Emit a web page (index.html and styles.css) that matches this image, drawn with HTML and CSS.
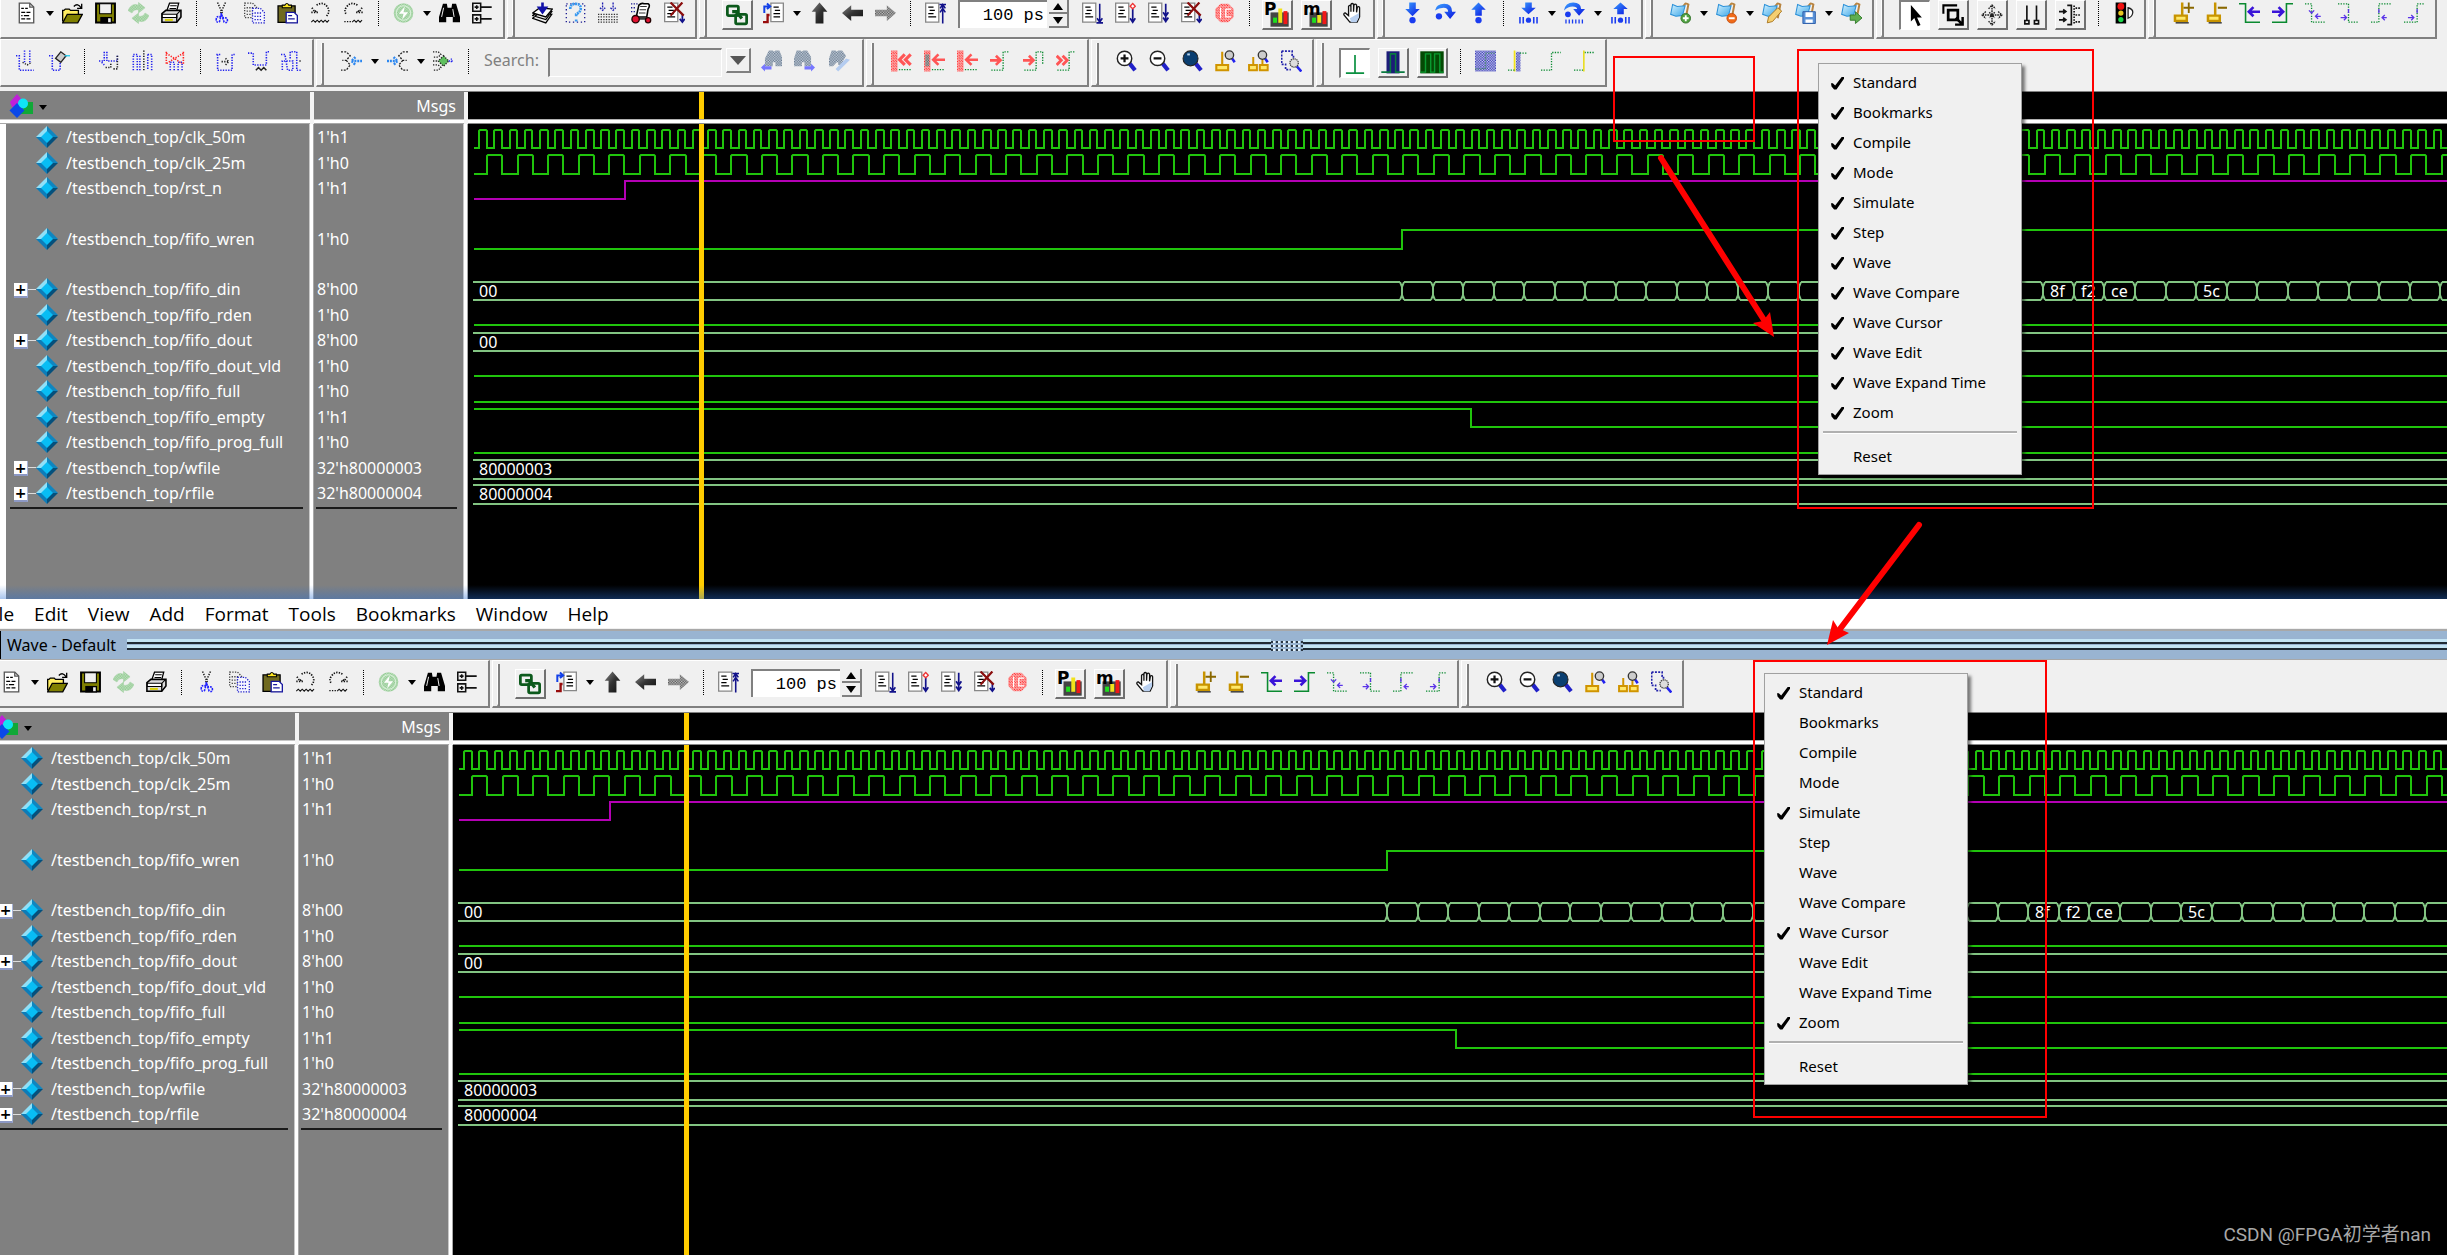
FILE: index.html
```html
<!DOCTYPE html>
<html lang="en">
<head>
<meta charset="utf-8">
<title>Wave - Default</title>
<link rel="stylesheet" href="styles.css">
</head>
<body>
<svg class="sprite" width="0" height="0" aria-hidden="true">
  <defs>
    <pattern id="ck-red" width="2" height="2" patternUnits="userSpaceOnUse"><path d="M0 0h1v1H0zM1 1h1v1H1z" fill="#f22"/><path d="M1 0h1v1H1zM0 1h1v1H0z" fill="#faa"/></pattern>
    <pattern id="ck-green" width="2" height="2" patternUnits="userSpaceOnUse"><path d="M0 0h2v2H0z" fill="#c4e2c4"/><path d="M0 0h1v1H0zM1 1h1v1H1z" fill="#8cc88c"/></pattern>
    <pattern id="ck-gray" width="2" height="2" patternUnits="userSpaceOnUse"><path d="M0 0h2v2H0z" fill="#c4c4c4"/><path d="M0 0h1v1H0zM1 1h1v1H1z" fill="#555"/></pattern>
    <pattern id="ck-steel" width="2" height="2" patternUnits="userSpaceOnUse"><path d="M0 0h2v2H0z" fill="#c9d2de"/><path d="M0 0h1v1H0zM1 1h1v1H1z" fill="#66788c"/></pattern>
    <pattern id="ck-blue" width="2" height="2" patternUnits="userSpaceOnUse"><path d="M0 0h2v2H0z" fill="#d4d8f4"/><path d="M0 0h1v1H0zM1 1h1v1H1z" fill="#3030b0"/></pattern>
    <linearGradient id="g-dark" x1="0" y1="0" x2="1" y2="1"><stop offset="0" stop-color="#888"/><stop offset=".5" stop-color="#333"/><stop offset="1" stop-color="#111"/></linearGradient>
    <linearGradient id="g-blue" x1="0" y1="0" x2="1" y2="1"><stop offset="0" stop-color="#3aa0ff"/><stop offset="1" stop-color="#0a14e0"/></linearGradient>
    <linearGradient id="g-sky" x1="0" y1="0" x2="1" y2="1"><stop offset="0" stop-color="#d4f2ff"/><stop offset="1" stop-color="#3aa6e8"/></linearGradient>
  </defs>

  <symbol id="doc" viewBox="0 0 16 16"><path d="M2.5.5h8l3 3v12h-11z" fill="#fff" stroke="#555"/><path d="M10.500 .5v3h3" fill="none" stroke="#555"/><path d="M4 4.500h2m1 0h2M4 7.500h3m1 0h3M4 10h1m1 0h4M4 12.500h3m1 0h3" stroke="#000"/></symbol>
  <symbol id="open" viewBox="0 0 16 16"><path d="M.5 14.500V6h1l1-1h3l1 1h6v3" fill="#ffee60" stroke="#000"/><path d="M.5 15.500L4 9h11.500l-3.500 6.500z" fill="#808000" stroke="#000"/><path d="M9 3q3-3 5.500 1M15 1v3.500h-3.500" fill="none" stroke="#000"/></symbol>
  <symbol id="save" viewBox="0 0 16 16"><path d="M.8.8h14.400v14.400H.8z" fill="#808000" stroke="#000" stroke-width="1.500"/><path d="M3.500 1h9v7.500h-9z" fill="#f0f0f0" stroke="#000" stroke-width=".8"/><path d="M4 11h9v5H4z"/><path d="M10 12h2v3h-2z" fill="#eee"/></symbol>
  <symbol id="refresh" viewBox="0 0 16 16"><path d="M0 6q3-6 8-4V0l5 4-5 4V5.500Q4 5 3 8zM16 10q-3 6-8 4v2l-5-4 5-4v2.500q4 .5 5-2.500z" fill="url(#ck-green)" stroke="#9fd09f" stroke-width=".4"/></symbol>
  <symbol id="print" viewBox="0 0 16 16"><path d="M4.500 6l2-5.500h7L12 6" fill="#fff" stroke="#000"/><path d="M7 2.500h5M6.500 4.500h5" stroke="#000" stroke-width=".8"/><path d="M.7 8.500l3-2.500h11.500v5L12 15H.7z" fill="#ddd" stroke="#000" stroke-width="1.200"/><path d="M1 9h11v2.500H1zM12 9l3-3" fill="#fff" stroke="#000" stroke-width=".8"/><path d="M3 12.500h6v1.500H3z" fill="#d8d000"/><path d="M12 9v6" stroke="#000"/></symbol>
  <symbol id="cut" viewBox="0 0 16 16" fill="none" stroke-width="1.200"><path d="M5 0l4 9M11 0L7 9" stroke="#222" stroke-dasharray="1 1"/><path d="M8 8l-1 3q-3-1-3 2t2.500 1.500L8 9m0 0l1.500 3q3-1 3 1.500T10 15L8 9" stroke="#22f" stroke-dasharray="1.500 .7"/></symbol>
  <symbol id="copy" viewBox="0 0 16 16" stroke-dasharray="1 1"><path d="M.5.5h6l3 3v8h-9zM2 4h5M2 6.500h6M2 9h6" fill="none" stroke="#444"/><path d="M6.500 4.500h6l3 3v8h-9zM8 8h5M8 10.500h6M8 13h6" fill="#f6f6ff" stroke="#22c"/></symbol>
  <symbol id="paste" viewBox="0 0 16 16"><path d="M.8 2.500h13v12.700H.8z" fill="#706a20" stroke="#000"/><path d="M4 4V2h2q1.500-2.500 3 0h2v2z" fill="#ffe820" stroke="#000" stroke-width=".8"/><path d="M7 7.500h6l2.500 2.500v5.500H7z" fill="#fff" stroke="#1818a0"/><path d="M8.500 10h3m-3 2.500h5" stroke="#1818a0"/></symbol>
  <symbol id="undo" viewBox="0 0 16 16" fill="none" stroke="#111" stroke-dasharray="1 1"><path d="M1.500 4l2 3 2-1M1 7.500h5M5 2q5-3 8 1t-1 8" stroke-width="1.300"/><path d="M1 15l1.500-1.500L4 15l1.500-1.500L7 15l1.500-1.500L10 15l1.500-1.500L13 15l1.500-1.500" stroke-dasharray="none" stroke-width=".8"/></symbol>
  <symbol id="redo" viewBox="0 0 16 16" fill="none" stroke="#111" stroke-dasharray="1 1"><path d="M14.500 4l-2 3-2-1M15 7.500h-5M11 2Q6-1 3 3t0 6" stroke-width="1.300"/><path d="M1 14.500h5"/><path d="M7 15l1.500-1.500L10 15l1.500-1.500L13 15l1.500-1.500" stroke-dasharray="none" stroke-width=".8"/></symbol>
  <symbol id="go" viewBox="0 0 16 16"><circle cx="8" cy="8" r="7.500" fill="url(#ck-green)"/><circle cx="8" cy="8" r="5.500" fill="none" stroke="#d8f0d8" stroke-width=".8"/><path d="M9 3L4.500 8.500H8L7 13l4.500-5.500H8z" fill="#fff"/></symbol>
  <symbol id="find" viewBox="0 0 16 16"><path d="M3 1h3l.5 3h3L10 1h3l3 10v4h-5.500v-4h-5v4H0v-4z"/><path d="M3.500 4L2 11m8.500-6l1 6" stroke="#fff" stroke-width=".7"/></symbol>
  <symbol id="tree" viewBox="0 0 16 16" fill="none" stroke="#111" stroke-width="1.200"><path d="M.6.600h6v6h-6zM.6 9.400h6v6h-6zM6.600 3.500H15M6.600 12.500H15M2 3.500h3M3.600 2v3M2 12.500h3M3.600 11v3"/></symbol>

  <symbol id="compile" viewBox="0 0 16 16"><path d="M.5 12l4-3.500L15 9l-4.500 6.500zM.5 10L5 6.500l10 .5-4.500 6z" fill="#eee" stroke="#000"/><path d="M.5 8L6 4l9.500 1-5 6z" fill="#fff" stroke="#000"/><path d="M8 0v6M5.500 4L8 7.500 10.500 4z" stroke="#1212a8" stroke-width="2" fill="#1212a8"/></symbol>
  <symbol id="compile-ask" viewBox="0 0 16 16"><path d="M1 1h14v14H1z" fill="none" stroke="#1a1a90" stroke-dasharray="1 2"/><path d="M4 5q0-4 4-4t4 3.500Q12 7 8.500 9v2M8.500 13v2" fill="none" stroke="#3a9af0" stroke-width="2" stroke-dasharray="1.500 .5"/></symbol>
  <symbol id="compile-all" viewBox="0 0 16 16" fill="none"><path d="M3.500 0v5M11.500 0v5M1.500 4l2 2 2-2m4 0l2 2 2-2" stroke="#1a1ab0" stroke-dasharray="1.500 .8"/><path d="M0 9h16M0 11h16M0 13h16M0 15h16" stroke="#333" stroke-dasharray="1 1"/></symbol>
  <symbol id="sim" viewBox="0 0 16 16"><path d="M6 2q2-2 4-1h3q2 1 0 4l-1 6H4z" fill="#fff" stroke="#000" stroke-width="1.200"/><path d="M7 3h5M6.500 5.500h5M6 8h5" stroke="#333" stroke-width=".8"/><path d="M0 1h5M0 4h4M0 7h3" stroke="#1a1a90" stroke-dasharray="1 1"/><path d="M1 12.500h12" stroke="#000"/><circle cx="3.500" cy="12.700" r="2.800" fill="#e01030" stroke="#200"/><circle cx="13" cy="13.500" r="2" fill="#e01030" stroke="#200"/></symbol>
  <symbol id="doc-x" viewBox="0 0 16 16"><path d="M.5.5h10v14H.5z" fill="#fff" stroke="#888"/><path d="M2.500 3.500h4M3.500 6h4M2.500 8.500h5M2.500 11h6" stroke="#000"/><path d="M14 9v6m-2-2.500l2 2.500 1.800-2.500" stroke="#12128a" fill="none" stroke-width="1.300"/><path d="M5 0l10 10M14 0L5 10" stroke="#8a0d0d" stroke-width="1.700"/></symbol>

  <symbol id="link" viewBox="0 0 16 16" fill="none" stroke="#0c5a1c" stroke-width="2"><rect x="1" y="1.500" width="8" height="7" rx="1"/><rect x="7" y="7.500" width="8" height="7" rx="1"/><path d="M4.500 5.500h3l4 5" stroke-width="2.400"/></symbol>
  <symbol id="restart" viewBox="0 0 16 16"><path d="M6 .5h9.500v14H6z" fill="#fff" stroke="#888"/><path d="M8 3.500h4M9 6h4M8 8.500h5M8 11h5" stroke="#000"/><path d="M1 8V3h4M3 .8L5.500 3 3 5" fill="none" stroke="#1240e8" stroke-width="1.500"/><path d="M0 15h3.500V9.500H5" fill="none" stroke="#980c0c" stroke-width="1.800"/></symbol>
  <symbol id="arrow-up" viewBox="0 0 16 16"><path d="M8 0l6 7h-3v9H5V7H2z" fill="url(#g-dark)"/></symbol>
  <symbol id="arrow-left" viewBox="0 0 16 16"><path d="M0 8l7-6v3.500h9v5H7V14z" fill="url(#g-dark)"/></symbol>
  <symbol id="arrow-right" viewBox="0 0 16 16"><path d="M16 8L9 2v3.500H0v5h9V14z" fill="url(#ck-gray)"/></symbol>
  <symbol id="doc-top" viewBox="0 0 16 16"><path d="M.5.500h10v14.500H.5z" fill="#fff" stroke="#888"/><path d="M2.500 3.500h4M3.500 6h4M2.500 8.500h4M2.500 11h6" stroke="#000"/><path d="M13.500 16V1M11 1.500h5M11.500 4.500l2-3 2 3m-4 3l2-3 2 3" fill="none" stroke="#12128a" stroke-width="1.200"/></symbol>
  <symbol id="doc-down" viewBox="0 0 16 16"><path d="M.5.500h10v14.500H.5z" fill="#fff" stroke="#888"/><path d="M2.500 3.500h4M3.500 6h4M2.500 8.500h4M2.500 11h6" stroke="#000"/><path d="M13.500 1v14M11 15.500h5M11.500 12l2 3 2-3" fill="none" stroke="#12128a" stroke-width="1.200"/></symbol>
  <symbol id="doc-next" viewBox="0 0 16 16"><path d="M.5.500h10v14.500H.5z" fill="#fff" stroke="#888"/><path d="M2.500 3.500h4M3.500 6h4M2.500 8.500h4M2.500 11h6" stroke="#000"/><path d="M13.500 5v10M11.500 12l2 3 2-3" fill="none" stroke="#12128a" stroke-width="1.300"/><path d="M13.500.8l2 2-2 2-2-2z" fill="#fff" stroke="#e33"/></symbol>
  <symbol id="doc-all" viewBox="0 0 16 16"><path d="M.5.500h10v14.500H.5z" fill="#fff" stroke="#888"/><path d="M2.500 3.500h4M3.500 6h4M2.500 8.500h4M2.500 11h6" stroke="#000"/><path d="M13.500 1v14M11.500 7.500l2 3 2-3m-4 4l2 3 2-3" fill="none" stroke="#12128a" stroke-width="1.300"/></symbol>
  <symbol id="stop" viewBox="0 0 16 16"><path d="M5 1h6l4 4v6l-4 4H5l-4-4V5z" fill="url(#ck-red)"/><path d="M5 4v8M9 5h4M9 5v6h4" stroke="#fff" fill="none"/></symbol>
  <symbol id="perf" viewBox="0 0 20 20"><path d="M5 8h14v11H5z" fill="#444"/><path d="M7 12h3v4H7z" fill="#1ee01e"/><path d="M11 5h3v11h-3z" fill="#f2e21a"/><path d="M15 7h3v10h-3z" fill="#f01818"/><text x="0" y="10" class="glyph">P</text></symbol>
  <symbol id="mem" viewBox="0 0 20 20"><path d="M5 8h14v11H5z" fill="#444"/><path d="M7 12h3v4H7z" fill="#1ee01e"/><path d="M11 10h3v6h-3z" fill="#f2e21a"/><path d="M15 7h3v10h-3z" fill="#f01818"/><text x="0" y="10" class="glyph">m</text></symbol>
  <symbol id="hand" viewBox="0 0 16 16"><path d="M6 15L1.500 9.500Q1 8 2.500 8L5 10V3q1-1.500 1.800 0V7 1.500q1-1.500 2 0V7l.3-5q1-1.500 2 0v5.500l.6-4q1.300-1 1.700.5v7L11.500 15z" fill="#fff" stroke="#111"/><path d="M7 15l-1-3 7-4v3l-2 4z" fill="#b9d0f0"/></symbol>

  <symbol id="step-in" viewBox="0 0 16 16"><path d="M5.500 0h5v5h3L8 10.500 2.500 5h3z" fill="url(#g-blue)"/><circle cx="8" cy="13.500" r="2.400" fill="#1a3cf0"/></symbol>
  <symbol id="step-over" viewBox="0 0 16 16"><path d="M0 6Q1 1 7 1t6 6h3l-4.500 5.500L7 7h3q0-3-3.500-3T0 6z" fill="url(#g-blue)"/><circle cx="3" cy="10.500" r="2.400" fill="#1a3cf0"/></symbol>
  <symbol id="step-out" viewBox="0 0 16 16"><path d="M5.500 10V5.500h-3L8 0l5.500 5.500h-3V10z" fill="url(#g-blue)"/><circle cx="8" cy="13.500" r="2.400" fill="#1a3cf0"/></symbol>
  <symbol id="step-in-cur" viewBox="0 0 16 16"><path d="M5.500 0h5v4h3L8 9 2.500 4h3z" fill="url(#g-blue)"/><path d="M1.500 11v5M4 11v5M12 11v5M14.500 11v5" stroke="#1a3cf0" stroke-width="1.200"/><circle cx="8" cy="13.500" r="2" fill="#1a3cf0"/></symbol>
  <symbol id="step-over-cur" viewBox="0 0 16 16"><path d="M0 6Q1 0 7 0t6 5h3l-4.500 5L7 5h3q0-2-3.500-2T0 6z" fill="url(#g-blue)"/><circle cx="3" cy="9" r="2.200" fill="#1a3cf0"/><path d="M1.500 13v3M4 13v3M6.500 13v3M9 13v3M11.500 13v3M14 13v3" stroke="#1a3cf0"/></symbol>
  <symbol id="step-out-cur" viewBox="0 0 16 16"><path d="M5.500 9V5h-3L8 0l5.500 5h-3v4z" fill="url(#g-blue)"/><path d="M1.500 11v5M4 11v5M12 11v5M14.500 11v5" stroke="#1a3cf0" stroke-width="1.200"/><circle cx="8" cy="13.500" r="2" fill="#1a3cf0"/></symbol>

  <symbol id="flag" viewBox="0 0 16 16"><path d="M10 3l2-2.500 2 1L12 12" fill="none" stroke="#b88440" stroke-width="1.500"/><path d="M2 1.500l3.500 1.500 6-.5-2 7.500-5 .5L.5 9z" fill="url(#g-sky)" stroke="#2a90d8" stroke-width=".8"/></symbol>
  <symbol id="bm-add" viewBox="0 0 16 16"><use href="#flag"/><circle cx="12" cy="12" r="3.700" fill="#4fa040" stroke="#2c6c24" stroke-width=".6"/><path d="M12 9.800v4.400M9.800 12h4.400" stroke="#fff" stroke-width="1.400"/></symbol>
  <symbol id="bm-del" viewBox="0 0 16 16"><use href="#flag"/><circle cx="12" cy="12" r="3.700" fill="#f06a18" stroke="#c04808" stroke-width=".6"/><path d="M9.800 12h4.400" stroke="#fff" stroke-width="1.500"/></symbol>
  <symbol id="bm-edit" viewBox="0 0 16 16"><use href="#flag"/><path d="M5 11l7-7 3 2.500-7 8-4 1z" fill="#f6cf70" stroke="#a8741c" stroke-width=".7"/></symbol>
  <symbol id="bm-save" viewBox="0 0 16 16"><use href="#flag"/><path d="M6 7h9.500v9H6z" fill="#5a92d8" stroke="#2a5ca8" stroke-width=".7"/><path d="M8 7.500h5.500V11H8zM8 13h5.500v2.500H8z" fill="#fff"/></symbol>
  <symbol id="bm-load" viewBox="0 0 16 16"><use href="#flag"/><path d="M7 9.500h4V7l5 4.800-5 4.200v-2.500H7z" fill="#5fae50" stroke="#2f7a28" stroke-width=".7"/></symbol>

  <symbol id="pointer" viewBox="0 0 16 16"><path d="M5 0v12l2.500-2.500 2.500 6 2-1-2.500-5.500H13z"/></symbol>
  <symbol id="zoom-mode" viewBox="0 0 16 16" fill="none" stroke="#000"><path d="M1 7V1h10" stroke-width="1.500"/><path d="M4.500 4.500h7v7h-7z" stroke-width="2"/><path d="M10 10l5 5M15 9.500V15H9.500" stroke-width="1.800"/></symbol>
  <symbol id="pan" viewBox="0 0 16 16" fill="none" stroke="#222" stroke-dasharray="1.200 .6"><path d="M8 1v14M1 8h14M5.500 3.500L8 .8l2.500 2.700M5.500 12.500L8 15.200l2.500-2.700M3.500 5.500L.8 8l2.700 2.500M12.500 5.500L15.200 8l-2.700 2.500M6 6l4 4M10 6l-4 4"/></symbol>
  <symbol id="two-cursor" viewBox="0 0 16 16" fill="none" stroke="#111" stroke-width="1.200"><path d="M5 1v11M12 1v11M3.500 12h3v2.500h-3zM10.500 12h3v2.500h-3z"/></symbol>
  <symbol id="edit-mode" viewBox="0 0 16 16" fill="none" stroke="#111" stroke-width="1.200"><path d="M6 1h3v14H6M0 5.500h5M3 4l2 1.500L3 7M0 11.500h5M3 10l2 1.500L3 13"/><path d="M11 1v14M12 3h4M12 8h4M12 13h4" stroke-dasharray="1.200 .8"/></symbol>
  <symbol id="signal" viewBox="0 0 16 16"><path d="M2 0h8v16H2z"/><circle cx="6" cy="3" r="2.600" fill="#f01010"/><circle cx="6" cy="8" r="2" fill="#e8c820"/><circle cx="6" cy="13" r="2" fill="#1cd84c"/><path d="M11.500 4q4 1 3.500 4t-3.500 4z" fill="#fff" stroke="#222"/></symbol>

  <symbol id="cur-add" viewBox="0 0 16 16"><path d="M7 0v10M1.500 10h9v4h-9z" fill="#ffe86a" stroke="#c89400" stroke-width="1.900"/><path d="M2 15.500h10" stroke="#222"/><path d="M8 4h8M12 0v8" stroke="#8a6800" stroke-width="1.400"/></symbol>
  <symbol id="cur-del" viewBox="0 0 16 16"><path d="M7 0v10M1.500 10h9v4h-9z" fill="#ffe86a" stroke="#c89400" stroke-width="1.900"/><path d="M2 15.500h10" stroke="#222"/><path d="M9 4h7" stroke="#8a6800" stroke-width="1.600"/></symbol>
  <symbol id="edge-prev" viewBox="0 0 16 16" fill="none"><path d="M0 1h5v14h11" stroke="#0a8a30" stroke-width="1.200"/><path d="M8 7h8M11 3.500L7.500 7l3.500 3.500" stroke="#3a14d8" stroke-width="2"/></symbol>
  <symbol id="edge-next" viewBox="0 0 16 16" fill="none"><path d="M16 1h-5v14H0" stroke="#0a8a30" stroke-width="1.200"/><path d="M0 7h8M5 3.500L8.500 7 5 10.500" stroke="#3a14d8" stroke-width="2"/></symbol>
  <symbol id="fall-prev" viewBox="0 0 16 16" fill="none"><path d="M0 1h5v14h11" stroke="#0a8a30" stroke-dasharray="1 1"/><path d="M3 6l2 2 2-2M8 10.500h4M10 8.500l-2 2 2 2" stroke="#5a34e8"/></symbol>
  <symbol id="fall-next" viewBox="0 0 16 16" fill="none"><path d="M0 1h8v14h8" stroke="#0a8a30" stroke-dasharray="1 1"/><path d="M8 5v3M2 11.500h4M4.500 9.500l2 2-2 2" stroke="#5a34e8"/></symbol>
  <symbol id="rise-prev" viewBox="0 0 16 16" fill="none"><path d="M0 15h6V1h10" stroke="#0a8a30" stroke-dasharray="1 1"/><path d="M6 5v3M8 11.500h4M10.500 9.500l-2 2 2 2" stroke="#5a34e8"/></symbol>
  <symbol id="rise-next" viewBox="0 0 16 16" fill="none"><path d="M0 15h10V1h5" stroke="#0a8a30" stroke-dasharray="1 1"/><path d="M10 5v3M3 11.500h4M5.500 9.500l2 2-2 2" stroke="#5a34e8"/></symbol>

  <symbol id="we-insert" viewBox="0 0 16 16" fill="none" stroke="#22e" stroke-dasharray="1 1"><path d="M0 4h2.500v11h11M6.500 0v9M10.500 0v9" stroke-width="1.200"/><path d="M5 9l3.500 2L12 9" stroke="#222"/></symbol>
  <symbol id="we-paint" viewBox="0 0 16 16" fill="none"><path d="M0 4h2.500v11h6V8" stroke="#22e" stroke-width="1.200" stroke-dasharray="1 1"/><path d="M5 6l4-5 4 3-4 5z" fill="#ccc" stroke="#222"/><path d="M12 4h4" stroke="#2ce"/></symbol>
  <symbol id="we-cut" viewBox="0 0 16 16" fill="none" stroke="#22e" stroke-dasharray="1 1" stroke-width="1.200"><path d="M0 8h4V1m2 0v7h8V4M2 9l2 2"/><path d="M5 13h4V9M11 14h3V3" stroke="#222"/></symbol>
  <symbol id="we-copy" viewBox="0 0 16 16" fill="none" stroke="#22e" stroke-dasharray="1 1" stroke-width="1.200"><path d="M1 15V3h3v12M6 15V3M12 3v12M15 15V3h-4"/><path d="M9 0v16" stroke="#222"/></symbol>
  <symbol id="we-del" viewBox="0 0 16 16" fill="none" stroke="#22e" stroke-dasharray="1 1" stroke-width="1.200"><path d="M4 15V9h3v6M10 15V9h3v6"/><path d="M1 1v9M14 1v9M1 2l12 8M14 2L1 10" stroke="#f22"/></symbol>
  <symbol id="we-move" viewBox="0 0 16 16" fill="none" stroke="#22e" stroke-dasharray="1 1" stroke-width="1.200"><path d="M1 3h3M2 3v12h11V3h3"/><path d="M5 8.500h5M8 6l2.500 2.500L8 11" stroke="#222"/></symbol>
  <symbol id="we-stretch" viewBox="0 0 16 16" fill="none" stroke="#22e" stroke-dasharray="1 1" stroke-width="1.200"><path d="M0 2h4v9h10V1h2"/><path d="M6 15l2-2 2 2 2-2 2 2" stroke="#222" stroke-dasharray="none"/></symbol>
  <symbol id="we-invert" viewBox="0 0 16 16" fill="none" stroke="#22e" stroke-dasharray="1 1" stroke-width="1.200"><path d="M0 3h3l2 12h4V8H1v7M7 6V1h5v14h3"/><path d="M14 8h2" stroke="#222"/></symbol>
  <symbol id="exp-left" viewBox="0 0 16 16" fill="none"><path d="M0 1h4l3 3-3 3.500H1m3 0l3 3.500-3 4H0" stroke="#222" stroke-dasharray="1.500 1"/><path d="M8 8h8M11 5L8 8l3 3" stroke="#2a86f0" stroke-width="1.800" stroke-dasharray="1.500 .7"/></symbol>
  <symbol id="exp-right" viewBox="0 0 16 16" fill="none"><path d="M16 1h-4L9 4l3 3.500h3m-3 0l-3 3.500 3 4h4" stroke="#222" stroke-dasharray="1.500 1"/><path d="M0 8h8M5 5l3 3-3 3" stroke="#2a86f0" stroke-width="1.800" stroke-dasharray="1.500 .7"/></symbol>
  <symbol id="exp-all" viewBox="0 0 16 16" fill="none"><path d="M0 1h4l2 2-2 2H0M0 11h4l2 2-2 2H0M0 8h4" stroke="#222" stroke-dasharray="1 1"/><path d="M8 4l4 4-4 4-4-4z" fill="#5fc05f" stroke="#222" stroke-dasharray="1 1"/><path d="M12 8h4M14 6v4" stroke="#22e" stroke-dasharray="1 1"/></symbol>
  <symbol id="find-prev" viewBox="0 0 16 16"><path d="M6 0h3l1 1 1-1h3l2 5v7h-5V9H9v3H3V6z" fill="url(#ck-steel)"/><path d="M0 13l3-3v2h5v2.500H3V16z" fill="#77f"/></symbol>
  <symbol id="find-next" viewBox="0 0 16 16"><path d="M2 0h3l1 1 1-1h3l3 5v7H8V9H6v3H0V6z" fill="url(#ck-steel)"/><path d="M16 13l-3-3v2H8v2.500h5V16z" fill="#77f"/></symbol>
  <symbol id="find-opt" viewBox="0 0 16 16"><path d="M2 0h3l1 1 1-1h3l3 4-4 7H7V9H6l-3 3H0V6z" fill="url(#ck-steel)"/><path d="M5 14l8-8 3 1-9 9z" fill="#b4ccf0"/></symbol>

  <symbol id="cmp-first" viewBox="0 0 16 16"><path d="M0 0h5v16H0z" fill="url(#ck-red)"/><path d="M6 14.500h10" stroke="#0a8a30" stroke-dasharray="1 1"/><path d="M10.500 3L6.500 7l4 4M15 3l-4 4 4 4" fill="none" stroke="#f55" stroke-width="2.400"/></symbol>
  <symbol id="cmp-prev-a" viewBox="0 0 16 16"><path d="M0 0h5v16H0z" fill="url(#ck-red)"/><path d="M1 3h3v9H1z" fill="url(#ck-gray)"/><path d="M6 14.500h10" stroke="#0a8a30" stroke-dasharray="1 1"/><path d="M11 3L7 7l4 4M7 7h9" fill="none" stroke="#f55" stroke-width="2"/></symbol>
  <symbol id="cmp-prev" viewBox="0 0 16 16"><path d="M0 0h5v16H0z" fill="url(#ck-red)"/><path d="M6 14.500h10" stroke="#0a8a30" stroke-dasharray="1 1"/><path d="M11 3L7 7l4 4M7 7h9" fill="none" stroke="#f55" stroke-width="2"/></symbol>
  <symbol id="cmp-next" viewBox="0 0 16 16" fill="none"><path d="M1 15h9V1h5" stroke="#0a8a30" stroke-dasharray="1 1"/><path d="M0 7.500h8M4.500 4L8 7.500 4.500 11" stroke="#f55" stroke-width="2"/></symbol>
  <symbol id="cmp-next-a" viewBox="0 0 16 16" fill="none"><path d="M1 15h9V1h5v9" stroke="#0a8a30" stroke-dasharray="1 1"/><path d="M0 7.500h8M4.500 4L8 7.500 4.500 11" stroke="#f55" stroke-width="2"/></symbol>
  <symbol id="cmp-last" viewBox="0 0 16 16" fill="none"><path d="M1 15h9V1h5" stroke="#0a8a30" stroke-dasharray="1 1"/><path d="M.5 4L4 7.500.5 11M5 4l3.500 3.500L5 11" stroke="#f55" stroke-width="2.200"/></symbol>

  <symbol id="zoom-in" viewBox="0 0 16 16"><path d="M10.500 10l4 5" stroke="#2020c8" stroke-width="3.200"/><circle cx="6.500" cy="6" r="5.500" fill="#fff" stroke="#222" stroke-width="1.100"/><path d="M3.500 6h6M6.500 3v6" stroke="#111" stroke-width="1.700"/></symbol>
  <symbol id="zoom-out" viewBox="0 0 16 16"><path d="M10.500 10l4 5" stroke="#2020c8" stroke-width="3.200"/><circle cx="6.500" cy="6" r="5.500" fill="#fff" stroke="#222" stroke-width="1.100"/><path d="M3.500 6h6" stroke="#111" stroke-width="1.700"/></symbol>
  <symbol id="zoom-full" viewBox="0 0 16 16"><path d="M10.500 10l4 5" stroke="#2020c8" stroke-width="3.200"/><circle cx="6.500" cy="6" r="5.700" fill="#0a3e70" stroke="#222" stroke-width=".8"/><path d="M4 3h2" stroke="#bcd8f0" stroke-width="1.500"/></symbol>
  <symbol id="zoom-cur" viewBox="0 0 16 16"><path d="M5.500 1v10M1 11h9v4H1z" fill="#ffe86a" stroke="#d09400" stroke-width="1.600"/><path d="M13 6l2 3" stroke="#22e" stroke-width="2"/><circle cx="11" cy="3.500" r="3.200" fill="#ccc" stroke="#333"/></symbol>
  <symbol id="zoom-two" viewBox="0 0 16 16"><path d="M4 5v6M11 7v4M.8 11h6v4h-6zM9 11h6v4H9z" fill="#ffe86a" stroke="#d09400" stroke-width="1.500"/><path d="M13 6l2 3" stroke="#22e" stroke-width="2"/><circle cx="11" cy="3.500" r="3.200" fill="#ccc" stroke="#333"/></symbol>
  <symbol id="zoom-area" viewBox="0 0 16 16"><path d="M.5.500h8v3h1v3M.5.500v10h3v4h4" fill="none" stroke="#22a" stroke-width="1.300" stroke-dasharray="1.500 1"/><path d="M12 12l3.500 4" stroke="#22e" stroke-width="2"/><circle cx="10" cy="9.500" r="3.200" fill="#ddd" stroke="#444" stroke-dasharray="1 .5"/></symbol>

  <symbol id="ex-off" viewBox="0 0 20 20"><path d="M3 17h14M10 3v14" stroke="#0a9040" stroke-width="1.300"/></symbol>
  <symbol id="ex-delta" viewBox="0 0 20 20"><path d="M5 1h10v17H5z" fill="#1c1c78"/><path d="M1 17h7V3h4v14h7" fill="none" stroke="#0a7a40" stroke-width="1.200"/></symbol>
  <symbol id="ex-event" viewBox="0 0 20 20"><path d="M1 1h18v17H1z" fill="#044a04"/><path d="M1 17h4V3h4v14h3V3h4v14h3" fill="none" stroke="#0a9a30" stroke-width="1.100"/></symbol>
  <symbol id="ex-all" viewBox="0 0 16 16"><path d="M0 0h16v16H0z" fill="url(#ck-blue)"/><path d="M0 14h8V2h8" fill="none" stroke="#4a8a70" stroke-dasharray="1 1"/></symbol>
  <symbol id="ex-one" viewBox="0 0 16 16"><path d="M6 1h3.500v15H6z" fill="url(#ck-blue)"/><path d="M5 0v16" stroke="#f2e21a" stroke-width="1.300"/><path d="M0 15h5M9 2h5" stroke="#0a8a30" stroke-dasharray="1 1"/></symbol>
  <symbol id="ex-col" viewBox="0 0 16 16" fill="none"><path d="M0 15h8V1.500h7" stroke="#0a8a30" stroke-dasharray="1 1"/></symbol>
  <symbol id="ex-col-one" viewBox="0 0 16 16" fill="none"><path d="M0 15h7M8 1.500h7" stroke="#0a8a30" stroke-dasharray="1 1"/><path d="M7.500 0v16" stroke="#e8dc1a" stroke-width="1.200"/></symbol>

  <symbol id="objects" viewBox="0 0 24 24"><path d="M8 0l7 8-3 5H3L1 8z" fill="#c020d8"/><path d="M12 8h12v12H10z" fill="#10a838"/><circle cx="14" cy="9.500" r="5" fill="#10e4f4"/><path d="M8 9l7.500 7.500L8 24 .5 16.500z" fill="#0a48e8"/><circle cx="14" cy="9.500" r="4.500" fill="#10e4f4"/></symbol>
  <symbol id="diamond" viewBox="0 0 22 22"><path d="M11 0v11H0z" fill="#8fe0f8"/><path d="M11 0l11 11H11z" fill="#0f86c0"/><path d="M0 11h11v11z" fill="#0d7cb8"/><path d="M22 11H11v11z" fill="#05507c"/><path d="M11 5l6 6-6 6-6-6z" fill="#08bdf4"/></symbol>
</svg>

<div class="page">
  <main class="window">
    <div class="tool-row tool-row-cut" data-groups="standard compile simulate step bookmarks mode cursor"></div>
    <div class="tool-row" data-groups="edit expand compare zoom expandTime"></div>
    <div class="wave-view" data-signals></div>
    <div class="window-fade"></div>
  </main>

  <section class="window window-docked">
    <nav class="menubar">
      <button>File</button><button>Edit</button><button>View</button><button>Add</button><button>Format</button><button>Tools</button><button>Bookmarks</button><button>Window</button><button>Help</button>
    </nav>
    <header class="titlebar">
      <h1>Wave - Default</h1>
      <div class="title-lines"><span class="title-grip"></span></div>
    </header>
    <div class="tool-row" data-groups="standard simulate cursor zoom"></div>
    <div class="wave-view" data-signals></div>
  </section>

  <form class="popup popup-full" data-checked="all"></form>
  <form class="popup popup-trimmed" data-checked="Standard,Simulate,Wave Cursor,Zoom"></form>

  <svg class="marks" aria-hidden="true">
    <g fill="none" stroke="#f00" stroke-width="2">
      <rect x="1614" y="57" width="140" height="84"/>
      <rect x="1798" y="50" width="295" height="458"/>
      <rect x="1754" y="661" width="292" height="456"/>
    </g>
    <g stroke="#f00" stroke-width="6" stroke-linecap="round">
      <path d="M1661 158L1764 320"/>
      <path d="M1919 525L1840 629"/>
    </g>
    <path d="M1774 337L1753 323 1763 321 1770 312z" fill="#f00"/>
    <path d="M1827 645L1833 620 1838 628 1849 633z" fill="#f00"/>
  </svg>
  <p class="watermark">CSDN @FPGA初学者nan</p>
</div>
<script src="app.js"></script>
</body>
</html>
```

FILE: styles.css
```css
* { box-sizing: border-box; }

body {
  margin: 0;
  background: #000;
  font-family: "Noto Sans", "Noto Sans CJK SC", sans-serif;
  font-size: 15px;
  color: #000;
}

button {
  border: 0;
  padding: 0;
  background: none;
  font: inherit;
  color: inherit;
}

.sprite { position: absolute; }

.glyph { font: bold 13px "DejaVu Sans", sans-serif; }

.page {
  position: relative;
  display: flex;
  flex-direction: column;
  min-height: 100vh;
  overflow: hidden;
}

.window {
  position: relative;
  display: flex;
  flex-direction: column;
  background: #f0f0f0;
}

/* The docked window runs off the left edge of the screen. */
.window-docked {
  flex: 1;
  margin-left: -15px;
}

.window-fade {
  position: absolute;
  inset: auto 0 0 0;
  height: 14px;
  background: linear-gradient(rgba(40, 110, 210, 0), rgba(40, 110, 210, .4));
}

/* Toolbars */
.tool-row {
  display: flex;
  gap: 2px;
  height: 48px;
}

.tool-row-cut { margin-top: -9px; }

.tool-group {
  display: flex;
  align-items: flex-start;
  padding: 8px 4px 0;
  border: solid;
  border-width: 1px 2px 2px 1px;
  border-color: #fff #808080 #808080 #fff;
}

.tool-group:first-child { padding-left: 9px; }

.handle {
  width: 3px;
  height: 42px;
  margin: -5px 11px 0 0;
  border-right: 2px solid #808080;
  border-bottom: 2px solid #808080;
  border-left: 1px solid #fff;
}

.tool {
  display: grid;
  place-items: center;
  width: 33px;
  height: 26px;
}

.tool svg { width: 21px; height: 22px; }

.tool-framed {
  width: 31px;
  height: 30px;
  margin: 0 4px;
  border: solid;
  border-width: 1px 2px 2px 1px;
  border-color: #fff #707070 #707070 #fff;
}

.tool-framed svg { width: 22px; height: 22px; }
.tool-framed.wide svg { width: 26px; height: 26px; }

.tool-pressed {
  background: #fff;
  border-width: 2px 1px 1px 2px;
  border-color: #808080 #fff #fff #808080;
}

.caret {
  display: grid;
  place-items: center;
  width: 13px;
  height: 27px;
}

.caret::after {
  content: "";
  border: 4px solid transparent;
  border-top: 5px solid #000;
  border-bottom: 0;
}

.tool-sep {
  width: 1px;
  height: 25px;
  margin: 1px 8px 0;
  border-left: 1px dotted #000;
}

.run-length {
  width: 89px;
  height: 28px;
  margin: 0 2px 0 6px;
  padding: 0 3px;
  border: 0;
  border-top: 2px solid #808080;
  border-left: 2px solid #808080;
  background: #fff;
  font: 17px "Liberation Mono", monospace;
  text-align: right;
}

.spin {
  display: grid;
  width: 20px;
  margin-right: 7px;
}

.spin button {
  display: grid;
  place-items: center;
  height: 14px;
  border-right: 2px solid #808080;
  border-bottom: 2px solid #808080;
}

.spin button::after {
  content: "";
  border: 5px solid transparent;
  border-bottom: 7px solid #000;
  border-top: 0;
}

.spin button:last-child::after { transform: rotate(180deg); }

.search {
  display: flex;
  color: #808080;
}

.search label {
  width: 71px;
  padding-left: 7px;
  font-size: 16px;
  line-height: 24px;
}

.search input {
  width: 174px;
  height: 29px;
  border: solid;
  border-width: 2px 1px 1px 2px;
  border-color: #808080 #fff #fff #808080;
  background: #f0f0f0;
}

.search button {
  width: 25px;
  height: 25px;
  margin: 0 4px;
  border: solid;
  border-width: 1px 2px 2px 1px;
  border-color: #fff #808080 #808080 #fff;
  display: grid;
  place-items: center;
}

.search button::after {
  content: "";
  border: 8px solid transparent;
  border-top: 9px solid #555;
  border-bottom: 0;
}

.gap { width: 2px; }

/* Wave pane */
.wave-view {
  display: flex;
  flex: 1;
  margin-top: 4px;
  border-top: 1px solid #808080;
  color: #fff;
}

.signals {
  flex: none;
  padding-bottom: 90px;
  background: linear-gradient(to right,
    #fff 0 6px, #808080 6px 309px, #c8c8c8 309px 310px, #fff 310px 313px, #a8a8a8 313px 314px,
    #808080 314px 463px, #c8c8c8 463px 464px, #fff 464px 467px, #a8a8a8 467px 468px);
}

.signals table {
  width: 468px;
  border-collapse: separate;
  border-spacing: 0;
  table-layout: fixed;
}

.signals th {
  height: 32px;
  padding: 0 0 5px;
  border-right: 4px solid #f4f4f4;
  background: linear-gradient(#808080 0 27px, #c8c8c8 27px 28px, #fff 28px 31px, #a8a8a8 31px);
  font-weight: normal;
  font-size: 16px;
  line-height: 20px;
}

.signals th:first-child { width: 314px; }
.signals th:last-child { padding-right: 8px; text-align: right; }

.objects {
  display: flex;
  align-items: center;
  padding-left: 9px;
}

.objects svg { width: 24px; height: 24px; }

.objects .caret { width: 20px; height: 24px; padding-top: 4px; }

.signals td {
  height: 25px;
  padding: 0 0 1px 3px;
  font-size: 16px;
  line-height: 20px;
}

.signals tbody tr:first-child td { height: 26px; }
.signals tbody tr:nth-child(even) td { height: 26px; }
.signals tbody tr.tall td { height: 76px; }

.name {
  display: flex;
  align-items: center;
  padding-left: 33px;
}

.name svg { width: 22px; height: 22px; margin-right: 8px; }

.name-bus { padding-left: 11px; }

.expander {
  width: 14px;
  height: 15px;
  margin-top: 2px;
  background: #fff;
  border-right: 1px solid #a8b4d8;
  border-bottom: 2px solid #8c98c4;
  color: #000;
  font: bold 14px/12px "DejaVu Sans", sans-serif;
}

.name-bus::before { content: ""; order: 1; width: 8px; height: 1px; background: #ddd; }
.name-bus .expander { order: 0; }
.name-bus svg { order: 2; }
.name-bus span { order: 3; }

.signals tbody tr.end td {
  height: 3px;
  padding: 0 11px 0 10px;
}

.signals tbody tr.end td:last-child { padding: 0 11px 0 2px; }

.end div { height: 2px; background: #1a1a1a; }

.traces {
  position: relative;
  flex: 1;
  display: flex;
  flex-direction: column;
  min-width: 0;
  background: #000;
}

.timeline {
  height: 32px;
  background: linear-gradient(#000 0 27px, #b0b0b0 27px 28px, #fff 28px 31px, #888 31px);
}

.traces svg {
  width: 100%;
  height: 400px;
}

.traces text { fill: #fff; font-size: 16px; }

.cursor {
  position: absolute;
  inset: 0 auto 0 231px;
  width: 5px;
  background: linear-gradient(#fc0 0 27px, transparent 27px 32px, #fc0 32px);
}

/* Menu and title */
.menubar {
  display: flex;
  height: 30px;
  margin-left: -11px;
  background: #fff;
  border-bottom: 1px solid #f0f0f0;
}

.menubar button {
  padding: 0 10px;
  font-family: "Open Sans", sans-serif;
  font-size: 19px;
  line-height: 28px;
}

.titlebar {
  display: flex;
  align-items: center;
  gap: 10px;
  height: 31px;
  padding-left: 22px;
  border-top: 2px solid #a8a8a8;
  border-bottom: 1px solid #a8a8a8;
  background: linear-gradient(to right, #99b4d1 0 15px, #000 15px 16px, #99b4d1 16px);
}

.titlebar h1 {
  margin: 0;
  width: 110px;
  font-size: 16px;
  font-weight: normal;
  line-height: 24px;
  white-space: nowrap;
}

.title-lines {
  display: flex;
  justify-content: center;
  flex: 1;
  height: 12px;
  background: linear-gradient(#c4e4f4 0 3px, #202a34 3px 5px, #99b4d1 5px 6px, #c4e4f4 6px 9px, #202a34 9px 11px, #99b4d1 11px);
}

.title-grip {
  width: 32px;
  background:
    repeating-linear-gradient(#99b4d1 0 2px, transparent 2px 4px),
    repeating-linear-gradient(to right, #2c3844 0 2px, #e4f2fa 2px 4px, #99b4d1 4px 5px);
}

/* Pop-up menus */
.popup {
  position: absolute;
  width: 204px;
  padding: 3px 4px;
  background: #f0f0f0;
  border: 1px solid #a0a0a0;
  box-shadow: 3px 3px 3px rgba(0, 0, 0, .5);
  font-size: 15px;
}

.popup-full { left: 1818px; top: 63px; }
.popup-trimmed { left: 1764px; top: 673px; }

.popup label,
.popup button {
  display: flex;
  align-items: center;
  width: 100%;
  height: 30px;
  padding-left: 8px;
}

.popup button { padding-left: 30px; }

.popup hr {
  margin: 4px 0 7px;
  border: 0;
  border-top: 2px solid #b0b0b0;
  border-bottom: 1px solid #fff;
}

.popup input {
  appearance: none;
  width: 13px;
  height: 13px;
  margin: 2px 9px 0 0;
}

.popup input:checked {
  background: #000;
  clip-path: polygon(0 52%, 14% 52%, 32% 70%, 82% 4%, 100% 0, 100% 18%, 42% 100%, 24% 100%, 4% 76%);
}

.marks {
  position: absolute;
  inset: 0;
  width: 100%;
  height: 100%;
  pointer-events: none;
}

.watermark {
  position: absolute;
  right: 16px;
  bottom: 5px;
  margin: 0;
  font: 19px/30px Roboto, "Noto Sans CJK SC", sans-serif;
  color: #a8a8a8;
}
```

FILE: app.js
```js
// "|" is a separator, "v" a drop-down caret, "!" a framed button, "=" a pressed one.
const groups = {
  standard: "doc v open save refresh print | cut copy paste undo redo | go v find tree",
  compile: "compile compile-ask compile-all sim doc-x",
  simulate: "!link restart v arrow-up arrow-left arrow-right | doc-top <run> doc-down doc-next doc-all doc-x stop | !perf !mem hand",
  step: "step-in step-over step-out | step-in-cur v step-over-cur v step-out-cur",
  bookmarks: "bm-add v bm-del v bm-edit bm-save v bm-load",
  mode: "=pointer !zoom-mode !pan !two-cursor !edit-mode | signal",
  cursor: "cur-add cur-del edge-prev edge-next fall-prev fall-next rise-prev rise-next",
  edit: "we-insert we-paint | we-cut we-copy we-del | we-move we-stretch we-invert",
  expand: "exp-left v exp-right v exp-all | <search> find-prev find-next gap find-opt gap",
  compare: "cmp-first cmp-prev-a cmp-prev cmp-next cmp-next-a cmp-last",
  zoom: "zoom-in zoom-out zoom-full zoom-cur zoom-two zoom-area",
  expandTime: "=ex-off !ex-delta !ex-event | ex-all ex-one ex-col ex-col-one",
};
const wide = ["perf", "mem", "ex-off", "ex-delta", "ex-event"];

const icon = (id) => `<svg aria-hidden="true"><use href="#${id}"/></svg>`;

function tool(token) {
  if (token === "|") return '<span class="tool-sep"></span>';
  if (token === "v") return '<button class="caret" aria-label="More"></button>';
  if (token === "gap") return '<span class="gap"></span>';
  if (token === "<run>") {
    return '<input class="run-length" aria-label="Run length" value="100 ps">' +
      '<span class="spin"><button aria-label="Increase"></button><button aria-label="Decrease"></button></span>';
  }
  if (token === "<search>") {
    return '<span class="search"><label for="search">Search:</label><input id="search"><button aria-label="Search history"></button></span>';
  }
  const id = token.replace(/^[!=]/, "");
  let cls = "tool";
  if (id !== token) cls += " tool-framed";
  if (token[0] === "=") cls += " tool-pressed";
  if (wide.includes(id)) cls += " wide";
  return `<button class="${cls}" aria-label="${id}">${icon(id)}</button>`;
}

document.querySelectorAll("[data-groups]").forEach((row) => {
  row.innerHTML = row.dataset.groups.split(" ").map((name, i) =>
    `<div class="tool-group">${i ? '<span class="handle"></span>' : ""}${groups[name].split(" ").map(tool).join("")}</div>`
  ).join("");
});

// Signal list
const signals = [
  ["clk_50m", "1'h1"], ["clk_25m", "1'h0"], ["rst_n", "1'h1"], ["fifo_wren", "1'h0", "tall"],
  ["fifo_din", "8'h00", "bus"], ["fifo_rden", "1'h0"], ["fifo_dout", "8'h00", "bus"],
  ["fifo_dout_vld", "1'h0"], ["fifo_full", "1'h0"], ["fifo_empty", "1'h1"], ["fifo_prog_full", "1'h0"],
  ["wfile", "32'h80000003", "bus"], ["rfile", "32'h80000004", "bus"],
];

const signalRow = ([name, value, kind]) => `<tr class="${kind || "bit"}">
  <td><div class="name ${kind === "bus" ? "name-bus" : ""}">${kind === "bus" ? '<button class="expander" aria-label="Expand">+</button>' : ""}${icon("diamond")}<span>/testbench_top/${name}</span></div></td>
  <td>${value}</td></tr>`;

// Traces. Clock periods in pixels; the 25 MHz clock and the data share one period.
const PERIOD = 30.54;
const END = 2600;

function clock(first, half, high, low) {
  let d = `M6 ${low}`;
  let up = true;
  for (let k = 0; first + k * half < END; k++) {
    const x = Math.round(first + k * half);
    d += up ? `H${x}V${high + 1}l1 -1` : `h0H${x - 1}l1 1V${low}`;
    up = !up;
  }
  return d;
}

const line = (d, color) => `<path d="${d}" stroke="${color}" stroke-width="2" fill="none"/>`;
const GREEN = "#20c40c";
const PALE = "#82c482";

function bus(high, low, label) {
  return line(`M5 ${high}H${END}M5 ${low}H${END}`, PALE) + `<text x="11" y="${high + 15}">${label}</text>`;
}

function dataBus(high, low, first, labels) {
  let d = `M5 ${high}H${first - 2}M5 ${low}H${first - 2}`;
  let text = `<text x="11" y="${high + 15}">00</text>`;
  for (let k = 0; first + k * PERIOD < END; k++) {
    const x = Math.round(first + k * PERIOD);
    const next = Math.round(first + (k + 1) * PERIOD);
    d += `M${x - 2} ${high}l2 5V${low - 5}l-2 5M${x + 2} ${high}l-2 5M${x} ${low - 5}l2 5` +
      `M${x + 2} ${high}H${next - 2}M${x + 2} ${low}H${next - 2}`;
    if (labels[k]) text += `<text x="${x + 7}" y="${high + 15}">${labels[k]}</text>`;
  }
  return line(d, PALE) + text;
}

const traces =
  line(clock(11, PERIOD / 4, 6, 24), GREEN) +
  line(clock(19, PERIOD / 2, 31, 50), GREEN) +
  line(`M6 75H157V57H${END}`, "#b400b4") +
  line(`M6 125H934V106H${END}`, GREEN) +
  dataBus(158, 176, 934, { 21: "8f", 22: "f2", 23: "ce", 26: "5c" }) +
  line(`M6 201H${END}`, GREEN) +
  bus(209, 227, "00") +
  line(`M6 252H${END}M6 278H${END}`, GREEN) +
  line(`M6 285H1003V303H${END}`, GREEN) +
  line(`M6 329H${END}`, GREEN) +
  bus(336, 355, "80000003") +
  bus(361, 380, "80000004");

document.querySelectorAll("[data-signals]").forEach((view) => {
  view.innerHTML = `<div class="signals"><table>
    <thead><tr><th><div class="objects">${icon("objects")}<button class="caret" aria-label="Columns"></button></div></th><th>Msgs</th></tr></thead>
    <tbody>${signals.map(signalRow).join("")}<tr class="end"><td><div></div></td><td><div></div></td></tr></tbody>
    </table></div>
    <div class="traces"><div class="timeline"></div><div class="cursor"></div><svg role="img" aria-label="Signal traces">${traces}</svg></div>`;
});

// Toolbar pop-ups
const toolbars = ["Standard", "Bookmarks", "Compile", "Mode", "Simulate", "Step", "Wave",
  "Wave Compare", "Wave Cursor", "Wave Edit", "Wave Expand Time", "Zoom"];

document.querySelectorAll(".popup").forEach((popup) => {
  const on = popup.dataset.checked.split(",");
  popup.innerHTML = toolbars.map((name) =>
    `<label><input type="checkbox"${on[0] === "all" || on.includes(name) ? " checked" : ""}>${name}</label>`
  ).join("") + '<hr><button type="button">Reset</button>';
});
```
